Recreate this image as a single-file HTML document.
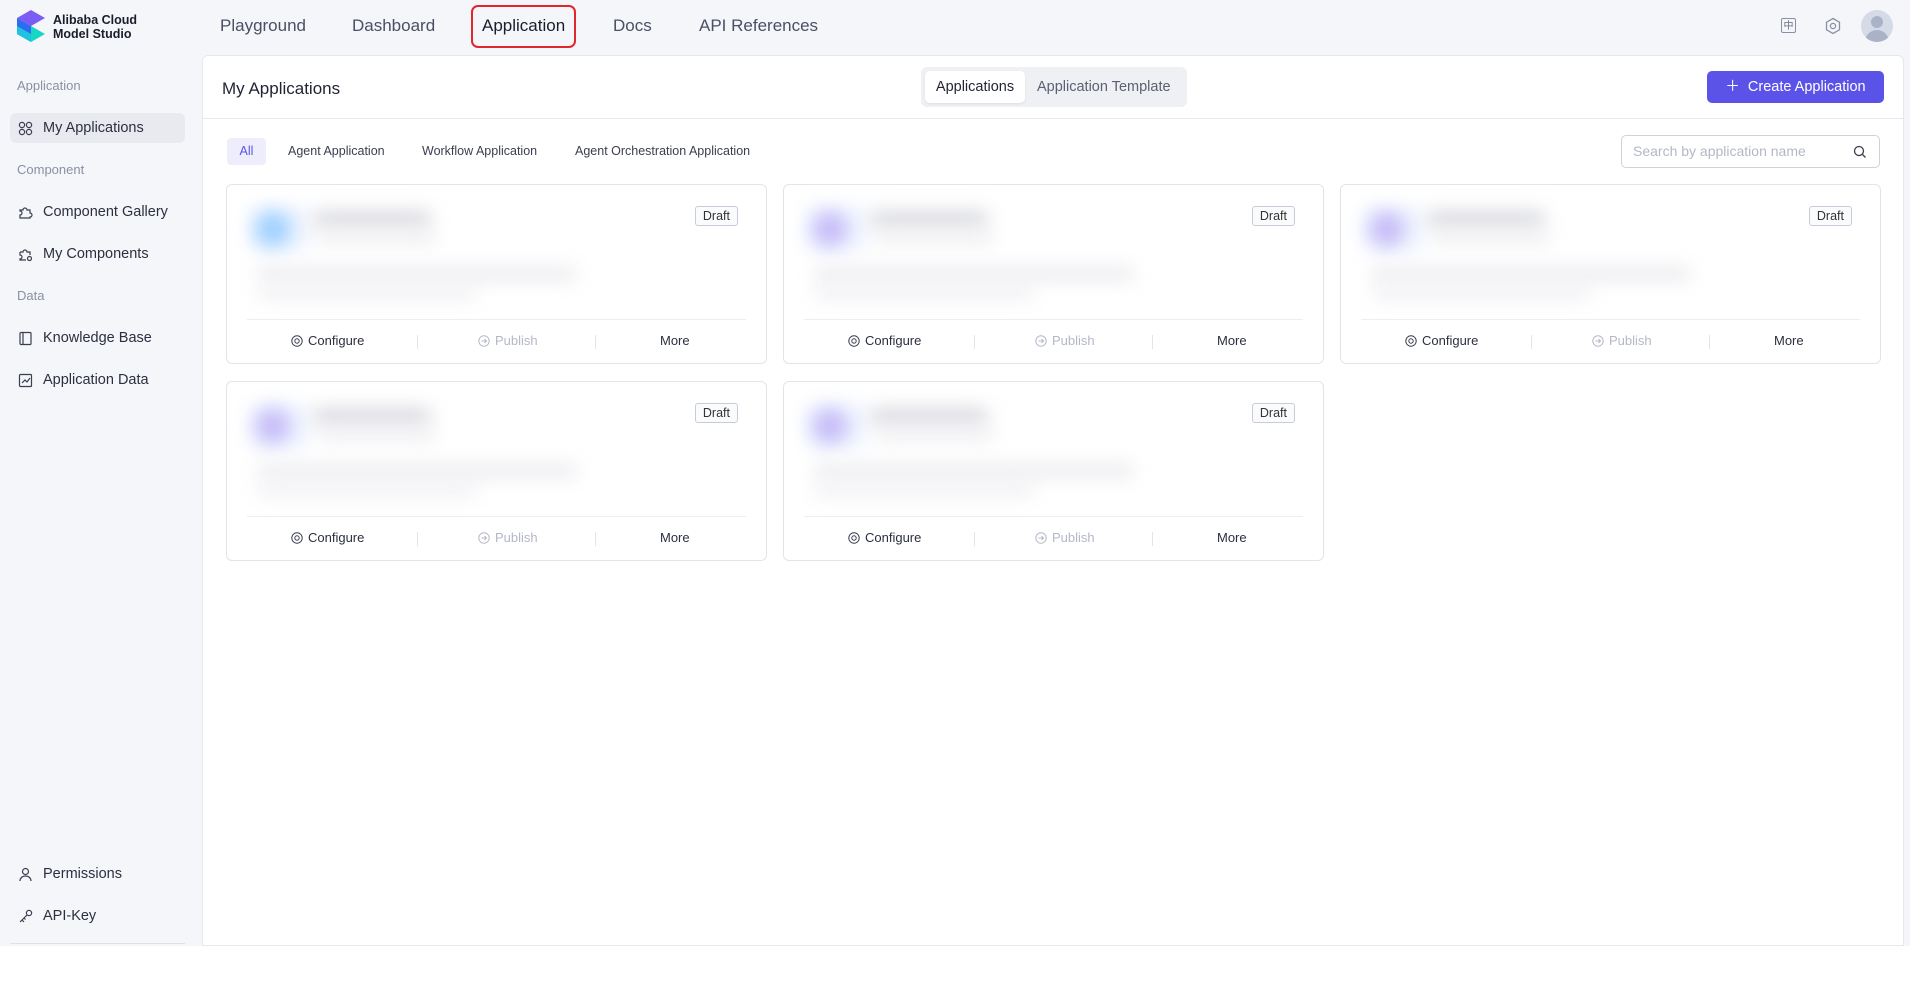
<!DOCTYPE html>
<html><head><meta charset="utf-8"><style>
*{box-sizing:border-box;margin:0;padding:0}
body{width:1910px;height:990px;background:#fff;font-family:"Liberation Sans",sans-serif;position:relative;overflow:hidden;color:#1f2333}
.bg{position:absolute;left:0;top:0;width:1910px;height:946px;background:#f5f6fa}
.a{position:absolute}
.nav{position:absolute;top:16px;font-size:17px;color:#4a4f63}
.side{position:absolute;left:10px;width:175px;height:30px;font-size:14.5px;color:#2b2f40;display:flex;align-items:center;padding-left:8px}
.side svg{margin-right:10px}
.lbl{position:absolute;left:17px;font-size:13px;color:#8a8fa3}
.panel{position:absolute;left:202px;top:55px;width:1702px;height:891px;background:#fff;border:1px solid #e6e8f0;border-radius:6px 6px 0 0}
.card{position:absolute;width:541px;height:180px;border:1px solid #e2e4ec;border-radius:6px;background:#fff;overflow:hidden}
.draft{position:absolute;right:28px;top:21px;border:1px solid #c9ccd8;border-radius:3px;font-size:12.5px;padding:2px 7px;color:#333;background:#fafbfc}
.fl{position:absolute;left:20px;right:20px;top:134px;border-top:1px solid #eceef3}
.ft{position:absolute;top:148px;font-size:13px;color:#2b2f40;display:flex;align-items:center;gap:5px}
.sep{position:absolute;top:150px;width:1px;height:14px;background:#e3e5ec}
.blur{position:absolute;filter:blur(9px)}
</style></head><body>
<div class="bg"></div>
<svg class="a" style="left:16px;top:10px" width="30" height="32" viewBox="0 0 30 32"><polygon points="15,0 29,8 15,16 1,8" fill="#7b5cf5"/><polygon points="1,8 15,16 15,32 1,24" fill="#2b6cf0"/><polygon points="15,16 29,24 15,32" fill="#18d6c6"/><polygon points="1,16 15,24 15,32 1,24" fill="#1fc3e0"/></svg>
<div class="a" style="left:53px;top:13px;font-size:12.5px;font-weight:bold;line-height:14px;color:#1a1d2b">Alibaba Cloud<br>Model Studio</div>
<div class="nav" style="left:220px">Playground</div>
<div class="nav" style="left:352px">Dashboard</div>
<div class="a" style="left:471px;top:5px;width:105px;height:43px;border:2px solid #e0262f;border-radius:7px"></div>
<div class="nav" style="left:482px;color:#1a1d2b">Application</div>
<div class="nav" style="left:613px">Docs</div>
<div class="nav" style="left:699px">API References</div>
<div class="a" style="left:1781px;top:18px;width:15px;height:15px;border:1.3px solid #8a8fa3;border-radius:2px;font-size:10px;line-height:12px;text-align:center;color:#6a6f83;font-family:'Noto Sans CJK SC',sans-serif">中</div>
<svg class="a" style="left:1824px;top:17px" width="18" height="18" viewBox="0 0 18 18" fill="none" stroke="#8a8fa3" stroke-width="1.3"><polygon points="9,1.5 15.5,5.2 15.5,12.8 9,16.5 2.5,12.8 2.5,5.2"/><circle cx="9" cy="9" r="2.6"/></svg>
<div class="a" style="left:1861px;top:10px;width:32px;height:32px;border-radius:50%;background:#d5dbe6;overflow:hidden"><div class="a" style="left:10px;top:6px;width:12px;height:12px;border-radius:50%;background:#aab2c8"></div><div class="a" style="left:4px;top:20px;width:24px;height:16px;border-radius:12px 12px 0 0;background:#aab2c8"></div></div>

<div class="lbl" style="top:78px">Application</div>
<div class="side" style="top:113px;background:#e9eaf0;border-radius:6px"><svg width="15" height="15" viewBox="0 0 15 15" fill="none" stroke="#3a3e50" stroke-width="1.2"><circle cx="4" cy="4" r="2.6"/><circle cx="11" cy="4" r="2.6"/><circle cx="4" cy="11" r="2.6"/><circle cx="11" cy="11" r="2.6"/></svg>My Applications</div>
<div class="lbl" style="top:162px">Component</div>
<div class="side" style="top:197px"><svg width="15" height="15" viewBox="0 0 15 15" fill="none" stroke="#3a3e50" stroke-width="1.2"><path d="M2 5h3a2 2 0 1 1 4 0h3v3a2 2 0 1 1 0 4v1H2v-3a2 2 0 1 0 0-4z"/></svg>Component Gallery</div>
<div class="side" style="top:239px"><svg width="15" height="15" viewBox="0 0 15 15" fill="none" stroke="#3a3e50" stroke-width="1.2"><path d="M2 5h3a2 2 0 1 1 4 0h3v3M2 5v3a2 2 0 1 1 0 4v1h6"/><circle cx="11.5" cy="11.5" r="2"/></svg>My Components</div>
<div class="lbl" style="top:288px">Data</div>
<div class="side" style="top:323px"><svg width="15" height="15" viewBox="0 0 15 15" fill="none" stroke="#3a3e50" stroke-width="1.2"><rect x="2" y="1.5" width="11" height="12" rx="1"/><path d="M5 1.5v12"/></svg>Knowledge Base</div>
<div class="side" style="top:365px"><svg width="15" height="15" viewBox="0 0 15 15" fill="none" stroke="#3a3e50" stroke-width="1.2"><rect x="1.5" y="1.5" width="12" height="12" rx="1"/><path d="M4 10l3-3 2 2 3-4"/></svg>Application Data</div>
<div class="side" style="top:859px"><svg width="15" height="15" viewBox="0 0 15 15" fill="none" stroke="#3a3e50" stroke-width="1.2"><circle cx="7.5" cy="4.5" r="3"/><path d="M2 14c0-3 2.5-5 5.5-5s5.5 2 5.5 5"/></svg>Permissions</div>
<div class="side" style="top:901px"><svg width="15" height="15" viewBox="0 0 15 15" fill="none" stroke="#3a3e50" stroke-width="1.2"><circle cx="11" cy="4" r="2.6"/><path d="M9 6L2 13M4 11l2 2M6 9l1.5 1.5"/></svg>API-Key</div>
<div class="a" style="left:10px;top:943px;width:175px;border-top:1px solid #dfe1e8"></div>

<div class="panel">
<div class="a" style="left:19px;top:23px;font-size:17px;color:#1f2333">My Applications</div>
<div class="a" style="left:718px;top:11px;width:266px;height:40px;background:#eff0f4;border-radius:6px"></div>
<div class="a" style="left:722px;top:15px;width:100px;height:32px;background:#fff;border-radius:5px;box-shadow:0 1px 2px rgba(0,0,0,.08);font-size:14.5px;text-align:center;line-height:32px;color:#1f2333">Applications</div>
<div class="a" style="left:834px;top:15px;font-size:14.5px;line-height:32px;color:#5b6073">Application Template</div>
<div class="a" style="left:1504px;top:15px;width:177px;height:32px;background:#5b53e8;border-radius:5px;color:#fff;font-size:14.5px;line-height:32px;text-align:center">＋&nbsp; Create Application</div>
<div class="a" style="left:0;top:62px;width:1700px;border-top:1px solid #e6e8f0"></div>
<div class="a" style="left:24px;top:82px;width:39px;height:27px;background:#eeedfb;border-radius:4px;color:#5b53e8;font-size:12.5px;line-height:27px;text-align:center">All</div>
<div class="a" style="left:85px;top:82px;font-size:12.5px;line-height:27px;color:#3a3e50">Agent Application</div>
<div class="a" style="left:219px;top:82px;font-size:12.5px;line-height:27px;color:#3a3e50">Workflow Application</div>
<div class="a" style="left:372px;top:82px;font-size:12.5px;line-height:27px;color:#3a3e50">Agent Orchestration Application</div>
<div class="a" style="left:1418px;top:79px;width:259px;height:33px;border:1px solid #cfd2dc;border-radius:5px;font-size:14px;line-height:31px;padding-left:11px;color:#b4b8c6">Search by application name</div>
<svg class="a" style="left:1650px;top:89px" width="14" height="14" viewBox="0 0 14 14" fill="none" stroke="#3a3e50" stroke-width="1.3"><circle cx="6" cy="6" r="4.5"/><path d="M9.5 9.5L12.5 12.5"/></svg>
</div>

<div id="cards"></div>
<script>
var pos=[[226,184,'#9fd0ff'],[783,184,'#c7bdf7'],[1340,184,'#c7bdf7'],[226,381,'#c7bdf7'],[783,381,'#c7bdf7']];
var h='';
pos.forEach(function(p){
h+='<div class="card" style="left:'+p[0]+'px;top:'+p[1]+'px">'+
'<div class="blur" style="left:22px;top:22px;width:60px;height:44px;background:#eef4ff;border-radius:8px"></div>'+
'<div class="blur" style="left:28px;top:26px;width:36px;height:36px;border-radius:50%;background:'+p[2]+'"></div>'+
'<div class="blur" style="left:85px;top:26px;width:120px;height:16px;background:#d8d9df;border-radius:8px"></div>'+
'<div class="blur" style="left:90px;top:48px;width:120px;height:10px;background:#ebebef;border-radius:6px"></div>'+
'<div class="blur" style="left:30px;top:82px;width:320px;height:14px;background:#ebebef;border-radius:6px"></div>'+
'<div class="blur" style="left:30px;top:102px;width:220px;height:12px;background:#efeff3;border-radius:6px"></div>'+
'<div class="draft">Draft</div><div class="fl"></div>'+
'<div class="ft" style="left:64px"><svg width="12" height="12" viewBox="0 0 12 12" fill="none" stroke="#3a3e50" stroke-width="1"><circle cx="6" cy="6" r="5.2"/><circle cx="6" cy="6" r="2.2"/></svg>Configure</div>'+
'<div class="sep" style="left:190px"></div>'+
'<div class="ft" style="left:251px;color:#b4b8c6"><svg width="12" height="12" viewBox="0 0 12 12" fill="none" stroke="#b4b8c6" stroke-width="1"><circle cx="6" cy="6" r="5.2"/><path d="M3.5 6h5M6.5 4l2 2-2 2"/></svg>Publish</div>'+
'<div class="sep" style="left:368px"></div>'+
'<div class="ft" style="left:433px">More</div></div>';
});
document.getElementById('cards').innerHTML=h;
</script>
</body></html>
